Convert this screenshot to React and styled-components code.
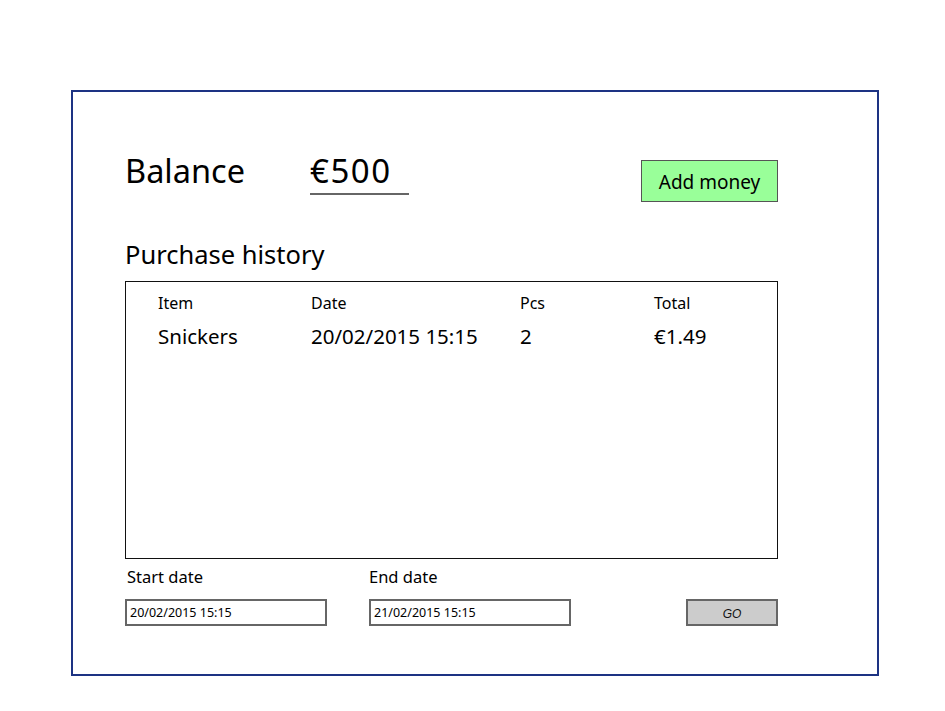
import React from "react";
import styled, { createGlobalStyle } from "styled-components";

const GlobalStyle = createGlobalStyle`
  html, body {
    margin: 0;
    padding: 0;
    background: #ffffff;
  }
  body {
    font-family: "Comic Sans MS", "Noto Sans", "DejaVu Sans", sans-serif;
    color: #000;
  }
`;

const Frame = styled.div`
  box-sizing: border-box;
  margin: 90px 0 0 71px;
  width: 808px;
  height: 586px;
  border: 2px solid #1d3383;
  padding: 0 99px 0 52px;
  display: flex;
  flex-direction: column;
`;

const TopRow = styled.div`
  display: flex;
  align-items: flex-start;
  margin-top: 56px;
  height: 62px;
`;

const BalanceLabel = styled.div`
  font-size: 32.5px;
  line-height: 40px;
  width: 185px;
  padding-top: 3px;
`;

const Amount = styled.div`
  box-sizing: border-box;
  font-size: 33px;
  letter-spacing: 1.5px;
  line-height: 40px;
  width: 99px;
  padding-top: 3px;
  border-bottom: 2px solid #666;
  height: 47px;
`;

const AddButton = styled.button`
  margin-left: auto;
  margin-top: 12px;
  box-sizing: border-box;
  width: 137px;
  height: 42px;
  background: #99ff99;
  border: 1.5px solid #555;
  font-family: inherit;
  font-size: 19px;
  color: #000;
  padding: 2px 0 0;
`;

const Heading = styled.h2`
  margin: 26px 0 0;
  font-weight: normal;
  font-size: 25.5px;
  line-height: 36px;
`;

const TableBox = styled.div`
  box-sizing: border-box;
  margin-top: 9px;
  height: 278px;
  border: 1px solid #111;
  padding: 9px 0 0 32px;
`;

const Row = styled.div`
  display: grid;
  grid-template-columns: 153px 209px 134px 1fr;
  align-items: center;
  height: ${(p) => (p.$head ? "24px" : "42px")};
  font-size: ${(p) => (p.$head ? "16px" : "20.5px")};
`;

const Filters = styled.div`
  display: grid;
  grid-template-columns: 244px 317px 1fr;
  margin-top: 8px;
`;

const Field = styled.div`
  display: flex;
  flex-direction: column;
`;

const FieldLabel = styled.label`
  font-size: 16.5px;
  line-height: 20px;
  padding-left: ${(p) => (p.$indent ? "2px" : "0")};
`;

const DateInput = styled.div`
  box-sizing: border-box;
  margin-top: 12px;
  width: 202px;
  height: 27px;
  border: 2px solid #666;
  font-size: 12.5px;
  line-height: 23px;
  padding-left: 3px;
`;

const GoButton = styled.button`
  align-self: end;
  justify-self: end;
  box-sizing: border-box;
  width: 92px;
  height: 27px;
  background: #cccccc;
  border: 2px solid #666;
  font-family: "Liberation Sans", Arial, sans-serif;
  font-style: italic;
  font-size: 12px;
  color: #111;
  padding: 2px 0 0;
`;

const history = [
  { item: "Snickers", date: "20/02/2015 15:15", pcs: "2", total: "€1.49" },
];

export default function App() {
  return (
    <>
      <GlobalStyle />
      <Frame>
        <TopRow>
          <BalanceLabel>Balance</BalanceLabel>
          <Amount>€500</Amount>
          <AddButton>Add money</AddButton>
        </TopRow>
        <Heading>Purchase history</Heading>
        <TableBox>
          <Row $head>
            <span>Item</span>
            <span>Date</span>
            <span>Pcs</span>
            <span>Total</span>
          </Row>
          {history.map((h) => (
            <Row key={h.item}>
              <span>{h.item}</span>
              <span>{h.date}</span>
              <span>{h.pcs}</span>
              <span>{h.total}</span>
            </Row>
          ))}
        </TableBox>
        <Filters>
          <Field>
            <FieldLabel $indent>Start date</FieldLabel>
            <DateInput>20/02/2015 15:15</DateInput>
          </Field>
          <Field>
            <FieldLabel>End date</FieldLabel>
            <DateInput>21/02/2015 15:15</DateInput>
          </Field>
          <GoButton>GO</GoButton>
        </Filters>
      </Frame>
    </>
  );
}
